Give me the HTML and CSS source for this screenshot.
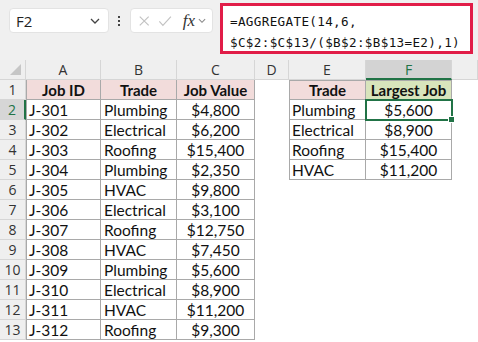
FILE: index.html
```html
<!DOCTYPE html>
<html lang="en">
<head>
    <meta charset="UTF-8">
    <title>Largest job by trade</title>
    <link rel="stylesheet" href="styles.css">
</head>
<body>
    <div class="toolbar">
        <div class="namebox">
            <span>F2</span>
            <svg class="chev" width="10" height="6" viewBox="0 0 10 6"><path d="M1 1l4 4 4-4" fill="none" stroke="#444" stroke-width="1.3"/></svg>
        </div>
        <div class="dots"><i></i><i></i><i></i></div>
        <div class="fxbox">
            <svg width="14" height="14" viewBox="0 0 14 14"><path d="M2 2l10 10M12 2L2 12" stroke="#c2c2c2" stroke-width="1.3"/></svg>
            <svg width="16" height="14" viewBox="0 0 16 14"><path d="M1.5 7.5l4 4.5 9-10" fill="none" stroke="#c2c2c2" stroke-width="1.3"/></svg>
            <span class="fx">fx</span>
            <svg width="9" height="6" viewBox="0 0 9 6"><path d="M1 1l3.5 3.5L8 1" fill="none" stroke="#888" stroke-width="1.2"/></svg>
        </div>
        <div class="formula">=AGGREGATE(14,6,<br>$C$2:$C$13/($B$2:$B$13=E2),1)</div>
    </div>

    <div class="sheet">
        <div class="hd corner"></div>
        <div class="hd">A</div><div class="hd">B</div><div class="hd">C</div><div class="hd">D</div><div class="hd">E</div><div class="hd sel">F</div><div class="hd"></div>

        <div class="rh">1</div>
        <div class="c b bl th pink">Job ID</div><div class="c b th pink">Trade</div><div class="c b th pink">Job Value</div><div class="c"></div>
        <div class="c b bl bt th pink">Trade</div><div class="c b bt th green">Largest Job</div><div class="c"></div>

        <div class="rh rsel">2</div>
        <div class="c b bl">J-301</div><div class="c b">Plumbing</div><div class="c b num">$4,800</div><div class="c"></div>
        <div class="c b bl">Plumbing</div><div class="c b num active">$5,600<span class="handle"></span></div><div class="c"></div>

        <div class="rh">3</div>
        <div class="c b bl">J-302</div><div class="c b">Electrical</div><div class="c b num">$6,200</div><div class="c"></div>
        <div class="c b bl">Electrical</div><div class="c b num">$8,900</div><div class="c"></div>

        <div class="rh">4</div>
        <div class="c b bl">J-303</div><div class="c b">Roofing</div><div class="c b num">$15,400</div><div class="c"></div>
        <div class="c b bl">Roofing</div><div class="c b num">$15,400</div><div class="c"></div>

        <div class="rh">5</div>
        <div class="c b bl">J-304</div><div class="c b">Plumbing</div><div class="c b num">$2,350</div><div class="c"></div>
        <div class="c b bl">HVAC</div><div class="c b num">$11,200</div><div class="c"></div>

        <div class="rh">6</div>
        <div class="c b bl">J-305</div><div class="c b">HVAC</div><div class="c b num">$9,800</div><div class="c"></div><div class="c"></div><div class="c"></div><div class="c"></div>

        <div class="rh">7</div>
        <div class="c b bl">J-306</div><div class="c b">Electrical</div><div class="c b num">$3,100</div><div class="c"></div><div class="c"></div><div class="c"></div><div class="c"></div>

        <div class="rh">8</div>
        <div class="c b bl">J-307</div><div class="c b">Roofing</div><div class="c b num">$12,750</div><div class="c"></div><div class="c"></div><div class="c"></div><div class="c"></div>

        <div class="rh">9</div>
        <div class="c b bl">J-308</div><div class="c b">HVAC</div><div class="c b num">$7,450</div><div class="c"></div><div class="c"></div><div class="c"></div><div class="c"></div>

        <div class="rh">10</div>
        <div class="c b bl">J-309</div><div class="c b">Plumbing</div><div class="c b num">$5,600</div><div class="c"></div><div class="c"></div><div class="c"></div><div class="c"></div>

        <div class="rh">11</div>
        <div class="c b bl">J-310</div><div class="c b">Electrical</div><div class="c b num">$8,900</div><div class="c"></div><div class="c"></div><div class="c"></div><div class="c"></div>

        <div class="rh">12</div>
        <div class="c b bl">J-311</div><div class="c b">HVAC</div><div class="c b num">$11,200</div><div class="c"></div><div class="c"></div><div class="c"></div><div class="c"></div>

        <div class="rh">13</div>
        <div class="c b bl">J-312</div><div class="c b">Roofing</div><div class="c b num">$9,300</div><div class="c"></div><div class="c"></div><div class="c"></div><div class="c"></div>
    </div>
</body>
</html>
```
FILE: styles.css
```css
html, body {
    margin: 0;
    background: #fff;
    overflow: hidden;
}
body {
    width: 478px;
    height: 342px;
    font-family: Lato, "Liberation Sans", sans-serif;
    color: #111;
}
.toolbar {
    display: flex;
    align-items: flex-start;
    height: 60px;
    box-sizing: border-box;
    padding: 3px 0 0 9px;
    background: #f0f0f0;
}
.namebox {
    display: flex;
    align-items: center;
    justify-content: space-between;
    box-sizing: border-box;
    width: 100px;
    height: 25px;
    margin-top: 5px;
    padding: 0 8px 0 6px;
    background: #fff;
    border: 1px solid #e3e3e3;
    border-radius: 4px;
    font-family: "Open Sans", "Liberation Sans", sans-serif;
    font-size: 15px;
    color: #222;
}
.dots {
    display: flex;
    flex-direction: column;
    gap: 2px;
    margin: 13px 10px 0 9px;
}
.dots i {
    display: block;
    width: 2px;
    height: 2px;
    background: #444;
}
.fxbox {
    display: flex;
    align-items: center;
    gap: 8px;
    box-sizing: border-box;
    width: 83px;
    height: 25px;
    margin-top: 5px;
    padding: 0 6px 0 7px;
    background: #fff;
    border: 1px solid #e3e3e3;
    border-radius: 4px;
}
.fx {
    font-family: "Liberation Serif", serif;
    font-style: italic;
    font-size: 17px;
    color: #333;
    margin-left: 2px;
    margin-right: -5px;
}
.formula {
    box-sizing: border-box;
    width: 253px;
    height: 51px;
    margin-left: 7px;
    padding: 5px 0 0 7px;
    background: #fff;
    border: 3px solid #e11d48;
    font-family: "DejaVu Sans Mono", "Liberation Mono", monospace;
    font-size: 12.6px;
    letter-spacing: 0.35px;
    line-height: 21px;
    color: #111;
    white-space: nowrap;
}
.sheet {
    display: grid;
    grid-template-columns: 26px 75px 76px 78px 34px 77px 86px 1fr;
    grid-auto-rows: 20px;
}
.hd {
    box-sizing: border-box;
    background: #efefef;
    border-right: 1px solid #d6d6d6;
    border-bottom: 1px solid #d6d6d6;
    text-align: center;
    font-family: "Open Sans", "Liberation Sans", sans-serif;
    font-size: 14px;
    line-height: 19px;
    color: #333;
}
.corner {
    position: relative;
}
.corner::after {
    content: "";
    position: absolute;
    right: 4px;
    bottom: 4px;
    border-style: solid;
    border-width: 0 0 11px 11px;
    border-color: transparent transparent #c6c6c6 transparent;
}
.hd.sel {
    background: #d3d3d3;
    border-bottom: 2px solid #217346;
    color: #217346;
}
.rh {
    box-sizing: border-box;
    background: #efefef;
    border-right: 1px solid #d6d6d6;
    border-bottom: 1px solid #d6d6d6;
    text-align: center;
    font-family: "Open Sans", "Liberation Sans", sans-serif;
    font-size: 14px;
    line-height: 19px;
    color: #333;
}
.rh.rsel {
    background: #d6d6d6;
    border-right: 2px solid #217346;
    color: #217346;
}
.c {
    box-sizing: border-box;
    padding: 1px 0 0 3px;
    font-size: 15.5px;
    line-height: 19px;
    white-space: nowrap;
    overflow: visible;
}
.b {
    border-right: 1px solid #a9a9a9;
    border-bottom: 1px solid #a9a9a9;
}
.bl {
    border-left: 1px solid #a9a9a9;
    padding-left: 2px;
}
.bt {
    border-top: 1px solid #a9a9a9;
    padding-top: 0;
}
.th {
    font-weight: 700;
    font-size: 15px;
    text-align: center;
    padding-left: 0;
}
.num {
    text-align: center;
    padding-left: 0;
}
.pink {
    background: #f2dcdb;
}
.green {
    background: #d8e4bc;
}
.active {
    position: relative;
    outline: 2px solid #217346;
    outline-offset: -1px;
}
.handle {
    position: absolute;
    right: -4px;
    bottom: -4px;
    width: 5px;
    height: 5px;
    background: #217346;
    border: 1px solid #fff;
}
```
